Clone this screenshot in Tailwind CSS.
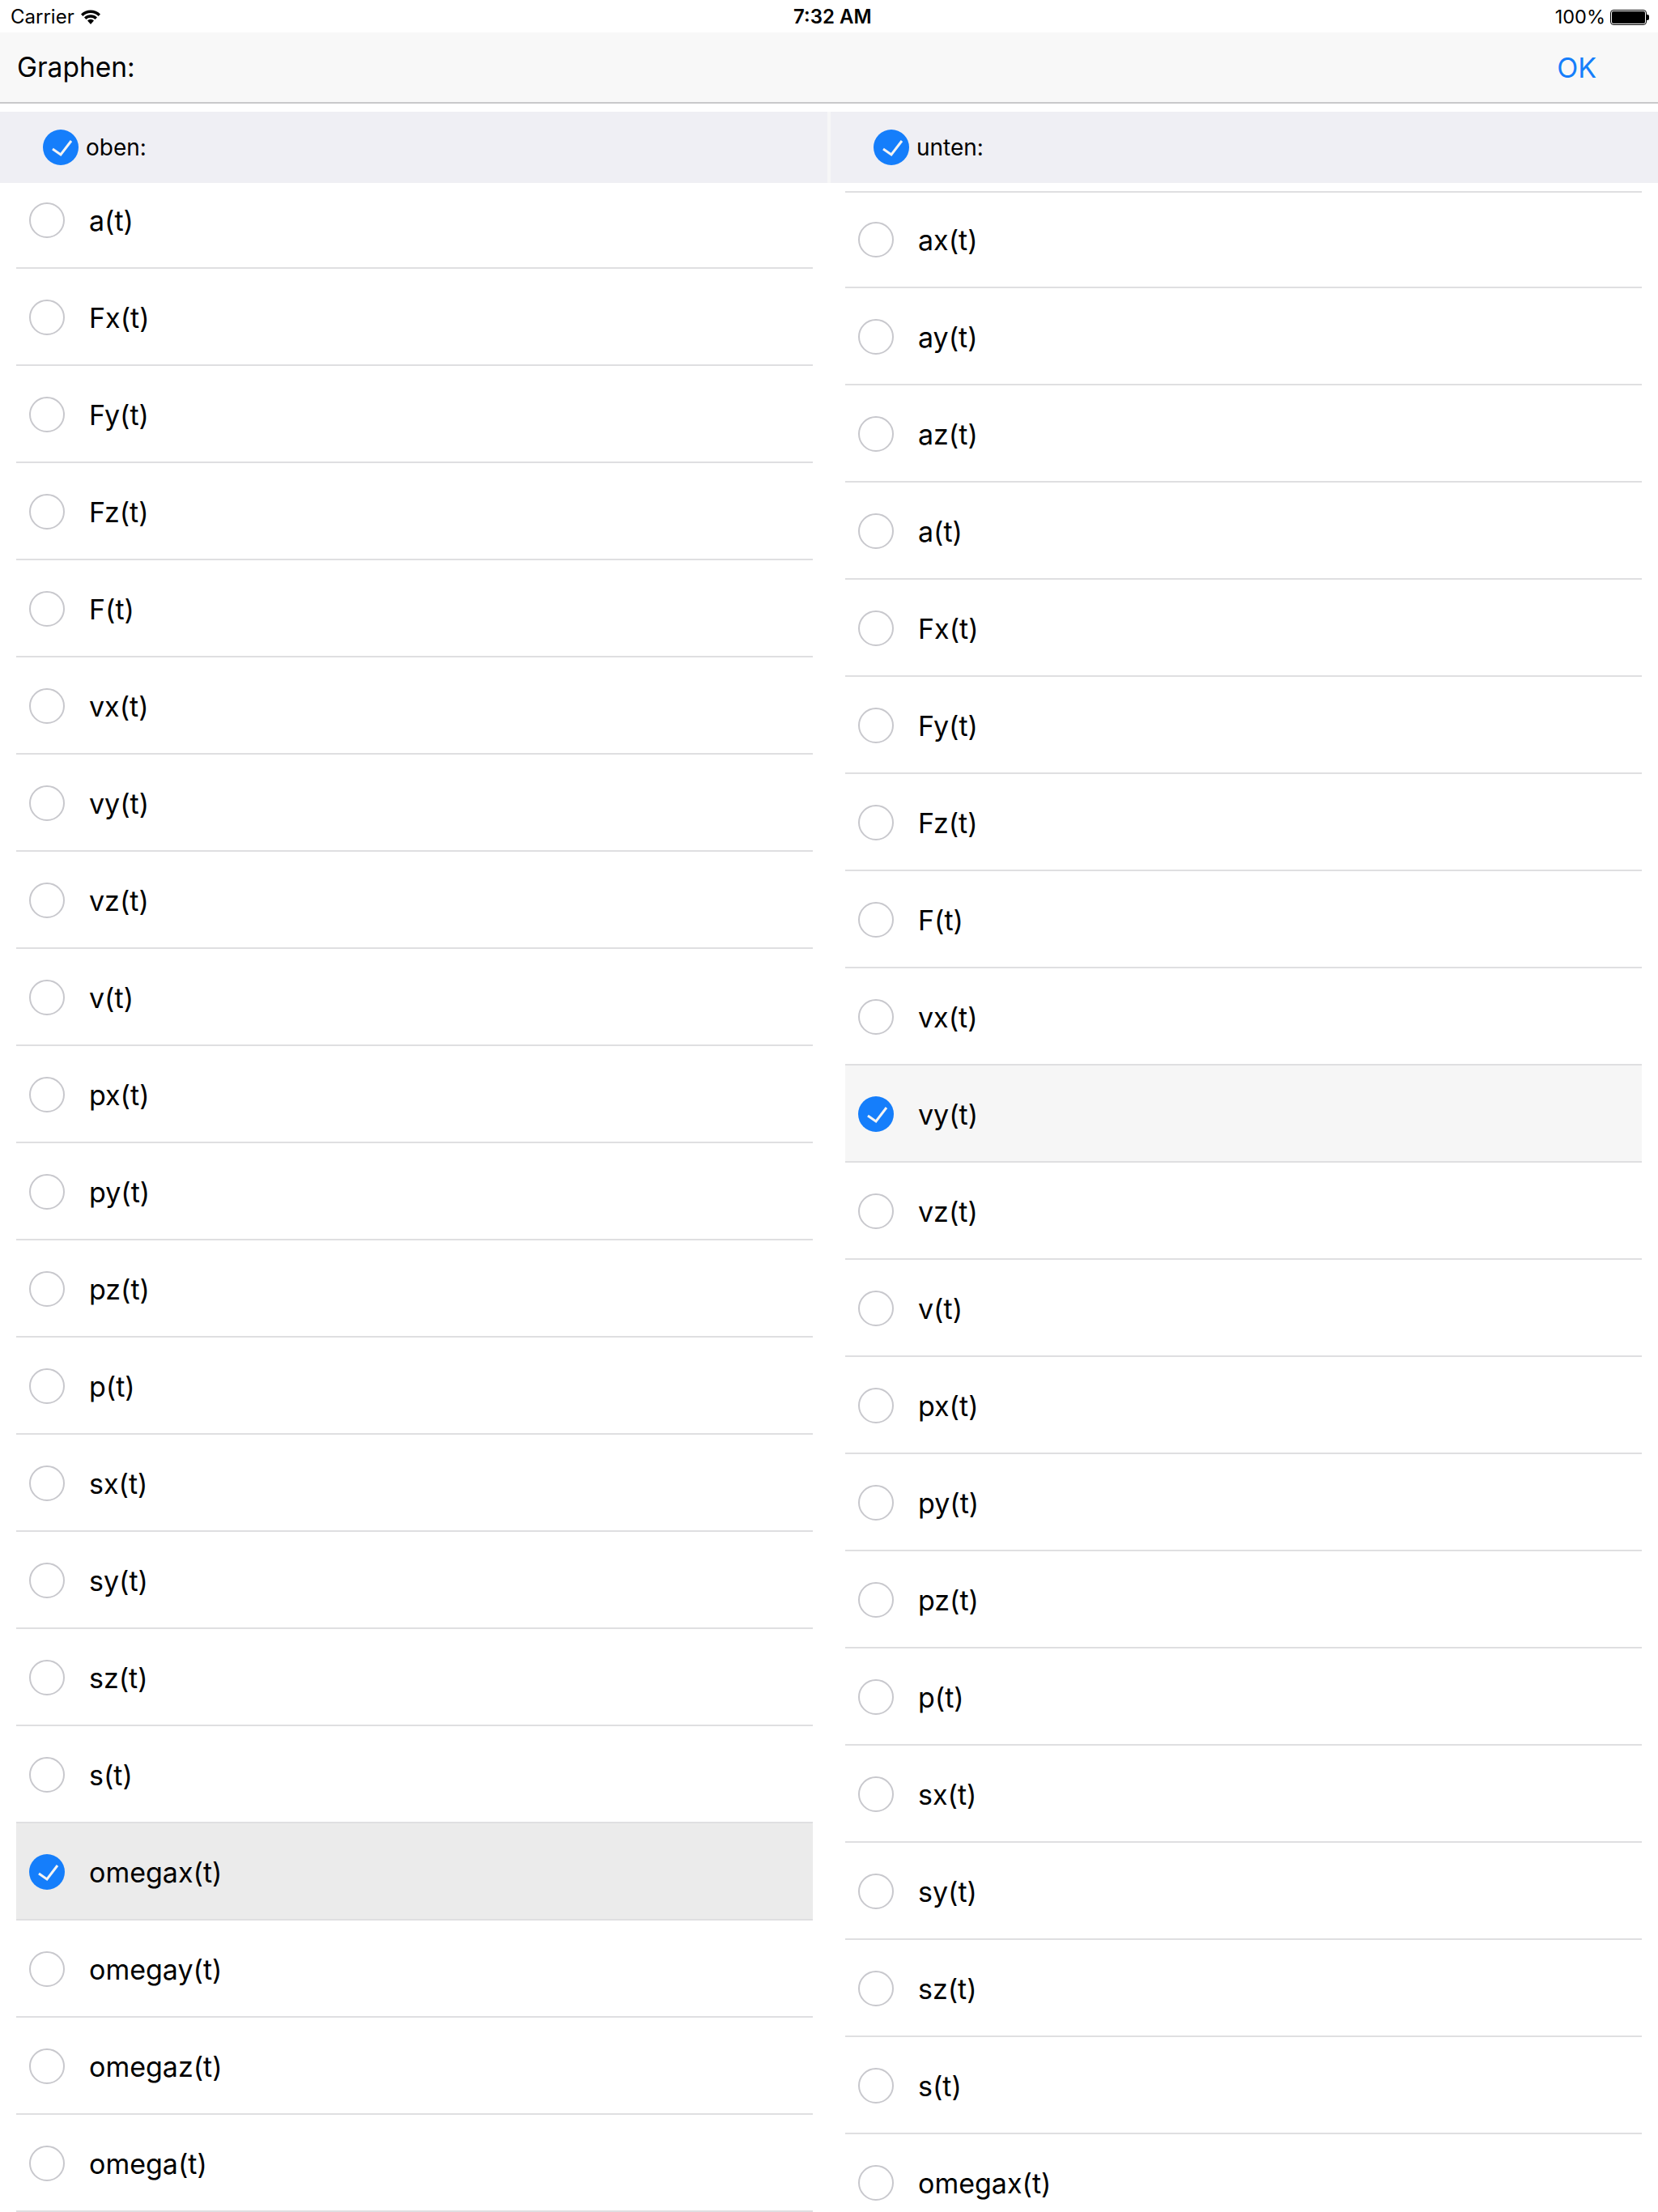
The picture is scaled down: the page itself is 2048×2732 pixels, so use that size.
<!DOCTYPE html>
<html lang="en">
<head>
  <meta charset="UTF-8" />
  <title>Graphen</title>
  <script src="https://cdn.jsdelivr.net/npm/@tailwindcss/browser@4"></script>
</head>
<body class="bg-white text-black font-['Inter',sans-serif] h-[2732px] overflow-hidden">

  <!-- Status bar -->
  <div class="h-[40px] pt-[2px] flex items-center justify-between relative pl-[13px] pr-[11px] text-[24px]">
    <div class="flex items-center gap-[7px]">
      <span>Carrier</span>
      <svg width="26" height="20" viewBox="0 0 26 20"><path d="M1 6.5 A17 17 0 0 1 25 6.5 L22.6 9 A13.6 13.6 0 0 0 3.4 9 Z M5 10.5 A11.4 11.4 0 0 1 21 10.5 L18.6 13 A8 8 0 0 0 7.4 13 Z M9 14.5 A5.7 5.7 0 0 1 17 14.5 L13 19 Z" fill="#000"/></svg>
    </div>
    <span class="absolute left-[980px] font-semibold">7:32 AM</span>
    <div class="flex items-center gap-[6px]">
      <span class="text-[23.5px]">100%</span>
      <div class="flex items-center">
        <div class="w-[45px] h-[19px] rounded-[4px] border border-black p-[1px]"><div class="h-full bg-black rounded-[2px]"></div></div>
        <div class="w-[3px] h-[7px] bg-black rounded-r-[2px]"></div>
      </div>
    </div>
  </div>

  <!-- Nav bar -->
  <div class="h-[88px] bg-[#f8f8f8] border-b-2 border-[#c9c9cb] flex items-center justify-between pl-[21px] pr-[76px] text-[34px]">
    <span class="text-[33.5px]">Graphen:</span>
    <span class="text-[#157efb]">OK</span>
  </div>

  <div class="flex mt-[10px]">

    <!-- Left column -->
    <div class="w-[1022px] h-[2594px] overflow-hidden">
      <div class="h-[88px] bg-[#efeff4] flex items-center pl-[53px] gap-[9px] text-[28px] relative z-10">
        <svg width="44" height="44" viewBox="0 0 44 44"><circle cx="22" cy="22" r="22" fill="#157efb"/><path d="M12 24 L22 31 L35 14" fill="none" stroke="#f4f4f4" stroke-width="3"/></svg>
        <span>oben:</span>
      </div>
      <div class="mt-[-14px] pl-[20px] pr-[18px] text-[34px]">
        <div class="h-[120px] pt-[2px] border-b-2 border-[#dfdfe1] flex items-center"><span class="w-[44px] h-[44px] rounded-full border-2 border-[#c8c8cd] ml-[16px] mr-[30px]"></span>a(t)</div>
        <div class="h-[120px] pt-[2px] border-b-2 border-[#dfdfe1] flex items-center"><span class="w-[44px] h-[44px] rounded-full border-2 border-[#c8c8cd] ml-[16px] mr-[30px]"></span>Fx(t)</div>
        <div class="h-[120px] pt-[2px] border-b-2 border-[#dfdfe1] flex items-center"><span class="w-[44px] h-[44px] rounded-full border-2 border-[#c8c8cd] ml-[16px] mr-[30px]"></span>Fy(t)</div>
        <div class="h-[120px] pt-[2px] border-b-2 border-[#dfdfe1] flex items-center"><span class="w-[44px] h-[44px] rounded-full border-2 border-[#c8c8cd] ml-[16px] mr-[30px]"></span>Fz(t)</div>
        <div class="h-[120px] pt-[2px] border-b-2 border-[#dfdfe1] flex items-center"><span class="w-[44px] h-[44px] rounded-full border-2 border-[#c8c8cd] ml-[16px] mr-[30px]"></span>F(t)</div>
        <div class="h-[120px] pt-[2px] border-b-2 border-[#dfdfe1] flex items-center"><span class="w-[44px] h-[44px] rounded-full border-2 border-[#c8c8cd] ml-[16px] mr-[30px]"></span>vx(t)</div>
        <div class="h-[120px] pt-[2px] border-b-2 border-[#dfdfe1] flex items-center"><span class="w-[44px] h-[44px] rounded-full border-2 border-[#c8c8cd] ml-[16px] mr-[30px]"></span>vy(t)</div>
        <div class="h-[120px] pt-[2px] border-b-2 border-[#dfdfe1] flex items-center"><span class="w-[44px] h-[44px] rounded-full border-2 border-[#c8c8cd] ml-[16px] mr-[30px]"></span>vz(t)</div>
        <div class="h-[120px] pt-[2px] border-b-2 border-[#dfdfe1] flex items-center"><span class="w-[44px] h-[44px] rounded-full border-2 border-[#c8c8cd] ml-[16px] mr-[30px]"></span>v(t)</div>
        <div class="h-[120px] pt-[2px] border-b-2 border-[#dfdfe1] flex items-center"><span class="w-[44px] h-[44px] rounded-full border-2 border-[#c8c8cd] ml-[16px] mr-[30px]"></span>px(t)</div>
        <div class="h-[120px] pt-[2px] border-b-2 border-[#dfdfe1] flex items-center"><span class="w-[44px] h-[44px] rounded-full border-2 border-[#c8c8cd] ml-[16px] mr-[30px]"></span>py(t)</div>
        <div class="h-[120px] pt-[2px] border-b-2 border-[#dfdfe1] flex items-center"><span class="w-[44px] h-[44px] rounded-full border-2 border-[#c8c8cd] ml-[16px] mr-[30px]"></span>pz(t)</div>
        <div class="h-[120px] pt-[2px] border-b-2 border-[#dfdfe1] flex items-center"><span class="w-[44px] h-[44px] rounded-full border-2 border-[#c8c8cd] ml-[16px] mr-[30px]"></span>p(t)</div>
        <div class="h-[120px] pt-[2px] border-b-2 border-[#dfdfe1] flex items-center"><span class="w-[44px] h-[44px] rounded-full border-2 border-[#c8c8cd] ml-[16px] mr-[30px]"></span>sx(t)</div>
        <div class="h-[120px] pt-[2px] border-b-2 border-[#dfdfe1] flex items-center"><span class="w-[44px] h-[44px] rounded-full border-2 border-[#c8c8cd] ml-[16px] mr-[30px]"></span>sy(t)</div>
        <div class="h-[120px] pt-[2px] border-b-2 border-[#dfdfe1] flex items-center"><span class="w-[44px] h-[44px] rounded-full border-2 border-[#c8c8cd] ml-[16px] mr-[30px]"></span>sz(t)</div>
        <div class="h-[120px] pt-[2px] border-b-2 border-[#dfdfe1] flex items-center"><span class="w-[44px] h-[44px] rounded-full border-2 border-[#c8c8cd] ml-[16px] mr-[30px]"></span>s(t)</div>
        <div class="h-[120px] pt-[2px] border-b-2 border-[#dfdfe1] flex items-center bg-[#ebebeb]"><svg class="ml-[16px] mr-[30px]" width="44" height="44" viewBox="0 0 44 44"><circle cx="22" cy="22" r="22" fill="#157efb"/><path d="M12 24 L22 31 L35 14" fill="none" stroke="#f4f4f4" stroke-width="3"/></svg>omegax(t)</div>
        <div class="h-[120px] pt-[2px] border-b-2 border-[#dfdfe1] flex items-center"><span class="w-[44px] h-[44px] rounded-full border-2 border-[#c8c8cd] ml-[16px] mr-[30px]"></span>omegay(t)</div>
        <div class="h-[120px] pt-[2px] border-b-2 border-[#dfdfe1] flex items-center"><span class="w-[44px] h-[44px] rounded-full border-2 border-[#c8c8cd] ml-[16px] mr-[30px]"></span>omegaz(t)</div>
        <div class="h-[120px] pt-[2px] border-b-2 border-[#dfdfe1] flex items-center"><span class="w-[44px] h-[44px] rounded-full border-2 border-[#c8c8cd] ml-[16px] mr-[30px]"></span>omega(t)</div>
      </div>
    </div>

    <!-- Divider -->
    <div class="w-[4px] h-[88px] bg-[#f7f7f7]"></div>

    <!-- Right column -->
    <div class="w-[1022px] h-[2594px] overflow-hidden">
      <div class="h-[88px] bg-[#efeff4] flex items-center pl-[53px] gap-[9px] text-[28px]">
        <svg width="44" height="44" viewBox="0 0 44 44"><circle cx="22" cy="22" r="22" fill="#157efb"/><path d="M12 24 L22 31 L35 14" fill="none" stroke="#f4f4f4" stroke-width="3"/></svg>
        <span>unten:</span>
      </div>
      <div class="mt-[10px] ml-[18px] mr-[20px] text-[34px]">
        <div class="h-[120px] border-t-2 border-b-2 border-[#dfdfe1] flex items-center"><span class="w-[44px] h-[44px] rounded-full border-2 border-[#c8c8cd] ml-[16px] mr-[30px]"></span>ax(t)</div>
        <div class="h-[120px] pt-[2px] border-b-2 border-[#dfdfe1] flex items-center"><span class="w-[44px] h-[44px] rounded-full border-2 border-[#c8c8cd] ml-[16px] mr-[30px]"></span>ay(t)</div>
        <div class="h-[120px] pt-[2px] border-b-2 border-[#dfdfe1] flex items-center"><span class="w-[44px] h-[44px] rounded-full border-2 border-[#c8c8cd] ml-[16px] mr-[30px]"></span>az(t)</div>
        <div class="h-[120px] pt-[2px] border-b-2 border-[#dfdfe1] flex items-center"><span class="w-[44px] h-[44px] rounded-full border-2 border-[#c8c8cd] ml-[16px] mr-[30px]"></span>a(t)</div>
        <div class="h-[120px] pt-[2px] border-b-2 border-[#dfdfe1] flex items-center"><span class="w-[44px] h-[44px] rounded-full border-2 border-[#c8c8cd] ml-[16px] mr-[30px]"></span>Fx(t)</div>
        <div class="h-[120px] pt-[2px] border-b-2 border-[#dfdfe1] flex items-center"><span class="w-[44px] h-[44px] rounded-full border-2 border-[#c8c8cd] ml-[16px] mr-[30px]"></span>Fy(t)</div>
        <div class="h-[120px] pt-[2px] border-b-2 border-[#dfdfe1] flex items-center"><span class="w-[44px] h-[44px] rounded-full border-2 border-[#c8c8cd] ml-[16px] mr-[30px]"></span>Fz(t)</div>
        <div class="h-[120px] pt-[2px] border-b-2 border-[#dfdfe1] flex items-center"><span class="w-[44px] h-[44px] rounded-full border-2 border-[#c8c8cd] ml-[16px] mr-[30px]"></span>F(t)</div>
        <div class="h-[120px] pt-[2px] border-b-2 border-[#dfdfe1] flex items-center"><span class="w-[44px] h-[44px] rounded-full border-2 border-[#c8c8cd] ml-[16px] mr-[30px]"></span>vx(t)</div>
        <div class="h-[120px] pt-[2px] border-b-2 border-[#dfdfe1] flex items-center bg-[#f6f6f6]"><svg class="ml-[16px] mr-[30px]" width="44" height="44" viewBox="0 0 44 44"><circle cx="22" cy="22" r="22" fill="#157efb"/><path d="M12 24 L22 31 L35 14" fill="none" stroke="#f4f4f4" stroke-width="3"/></svg>vy(t)</div>
        <div class="h-[120px] pt-[2px] border-b-2 border-[#dfdfe1] flex items-center"><span class="w-[44px] h-[44px] rounded-full border-2 border-[#c8c8cd] ml-[16px] mr-[30px]"></span>vz(t)</div>
        <div class="h-[120px] pt-[2px] border-b-2 border-[#dfdfe1] flex items-center"><span class="w-[44px] h-[44px] rounded-full border-2 border-[#c8c8cd] ml-[16px] mr-[30px]"></span>v(t)</div>
        <div class="h-[120px] pt-[2px] border-b-2 border-[#dfdfe1] flex items-center"><span class="w-[44px] h-[44px] rounded-full border-2 border-[#c8c8cd] ml-[16px] mr-[30px]"></span>px(t)</div>
        <div class="h-[120px] pt-[2px] border-b-2 border-[#dfdfe1] flex items-center"><span class="w-[44px] h-[44px] rounded-full border-2 border-[#c8c8cd] ml-[16px] mr-[30px]"></span>py(t)</div>
        <div class="h-[120px] pt-[2px] border-b-2 border-[#dfdfe1] flex items-center"><span class="w-[44px] h-[44px] rounded-full border-2 border-[#c8c8cd] ml-[16px] mr-[30px]"></span>pz(t)</div>
        <div class="h-[120px] pt-[2px] border-b-2 border-[#dfdfe1] flex items-center"><span class="w-[44px] h-[44px] rounded-full border-2 border-[#c8c8cd] ml-[16px] mr-[30px]"></span>p(t)</div>
        <div class="h-[120px] pt-[2px] border-b-2 border-[#dfdfe1] flex items-center"><span class="w-[44px] h-[44px] rounded-full border-2 border-[#c8c8cd] ml-[16px] mr-[30px]"></span>sx(t)</div>
        <div class="h-[120px] pt-[2px] border-b-2 border-[#dfdfe1] flex items-center"><span class="w-[44px] h-[44px] rounded-full border-2 border-[#c8c8cd] ml-[16px] mr-[30px]"></span>sy(t)</div>
        <div class="h-[120px] pt-[2px] border-b-2 border-[#dfdfe1] flex items-center"><span class="w-[44px] h-[44px] rounded-full border-2 border-[#c8c8cd] ml-[16px] mr-[30px]"></span>sz(t)</div>
        <div class="h-[120px] pt-[2px] border-b-2 border-[#dfdfe1] flex items-center"><span class="w-[44px] h-[44px] rounded-full border-2 border-[#c8c8cd] ml-[16px] mr-[30px]"></span>s(t)</div>
        <div class="h-[120px] pt-[2px] border-b-2 border-[#dfdfe1] flex items-center"><span class="w-[44px] h-[44px] rounded-full border-2 border-[#c8c8cd] ml-[16px] mr-[30px]"></span>omegax(t)</div>
      </div>
    </div>

  </div>
</body>
</html>
